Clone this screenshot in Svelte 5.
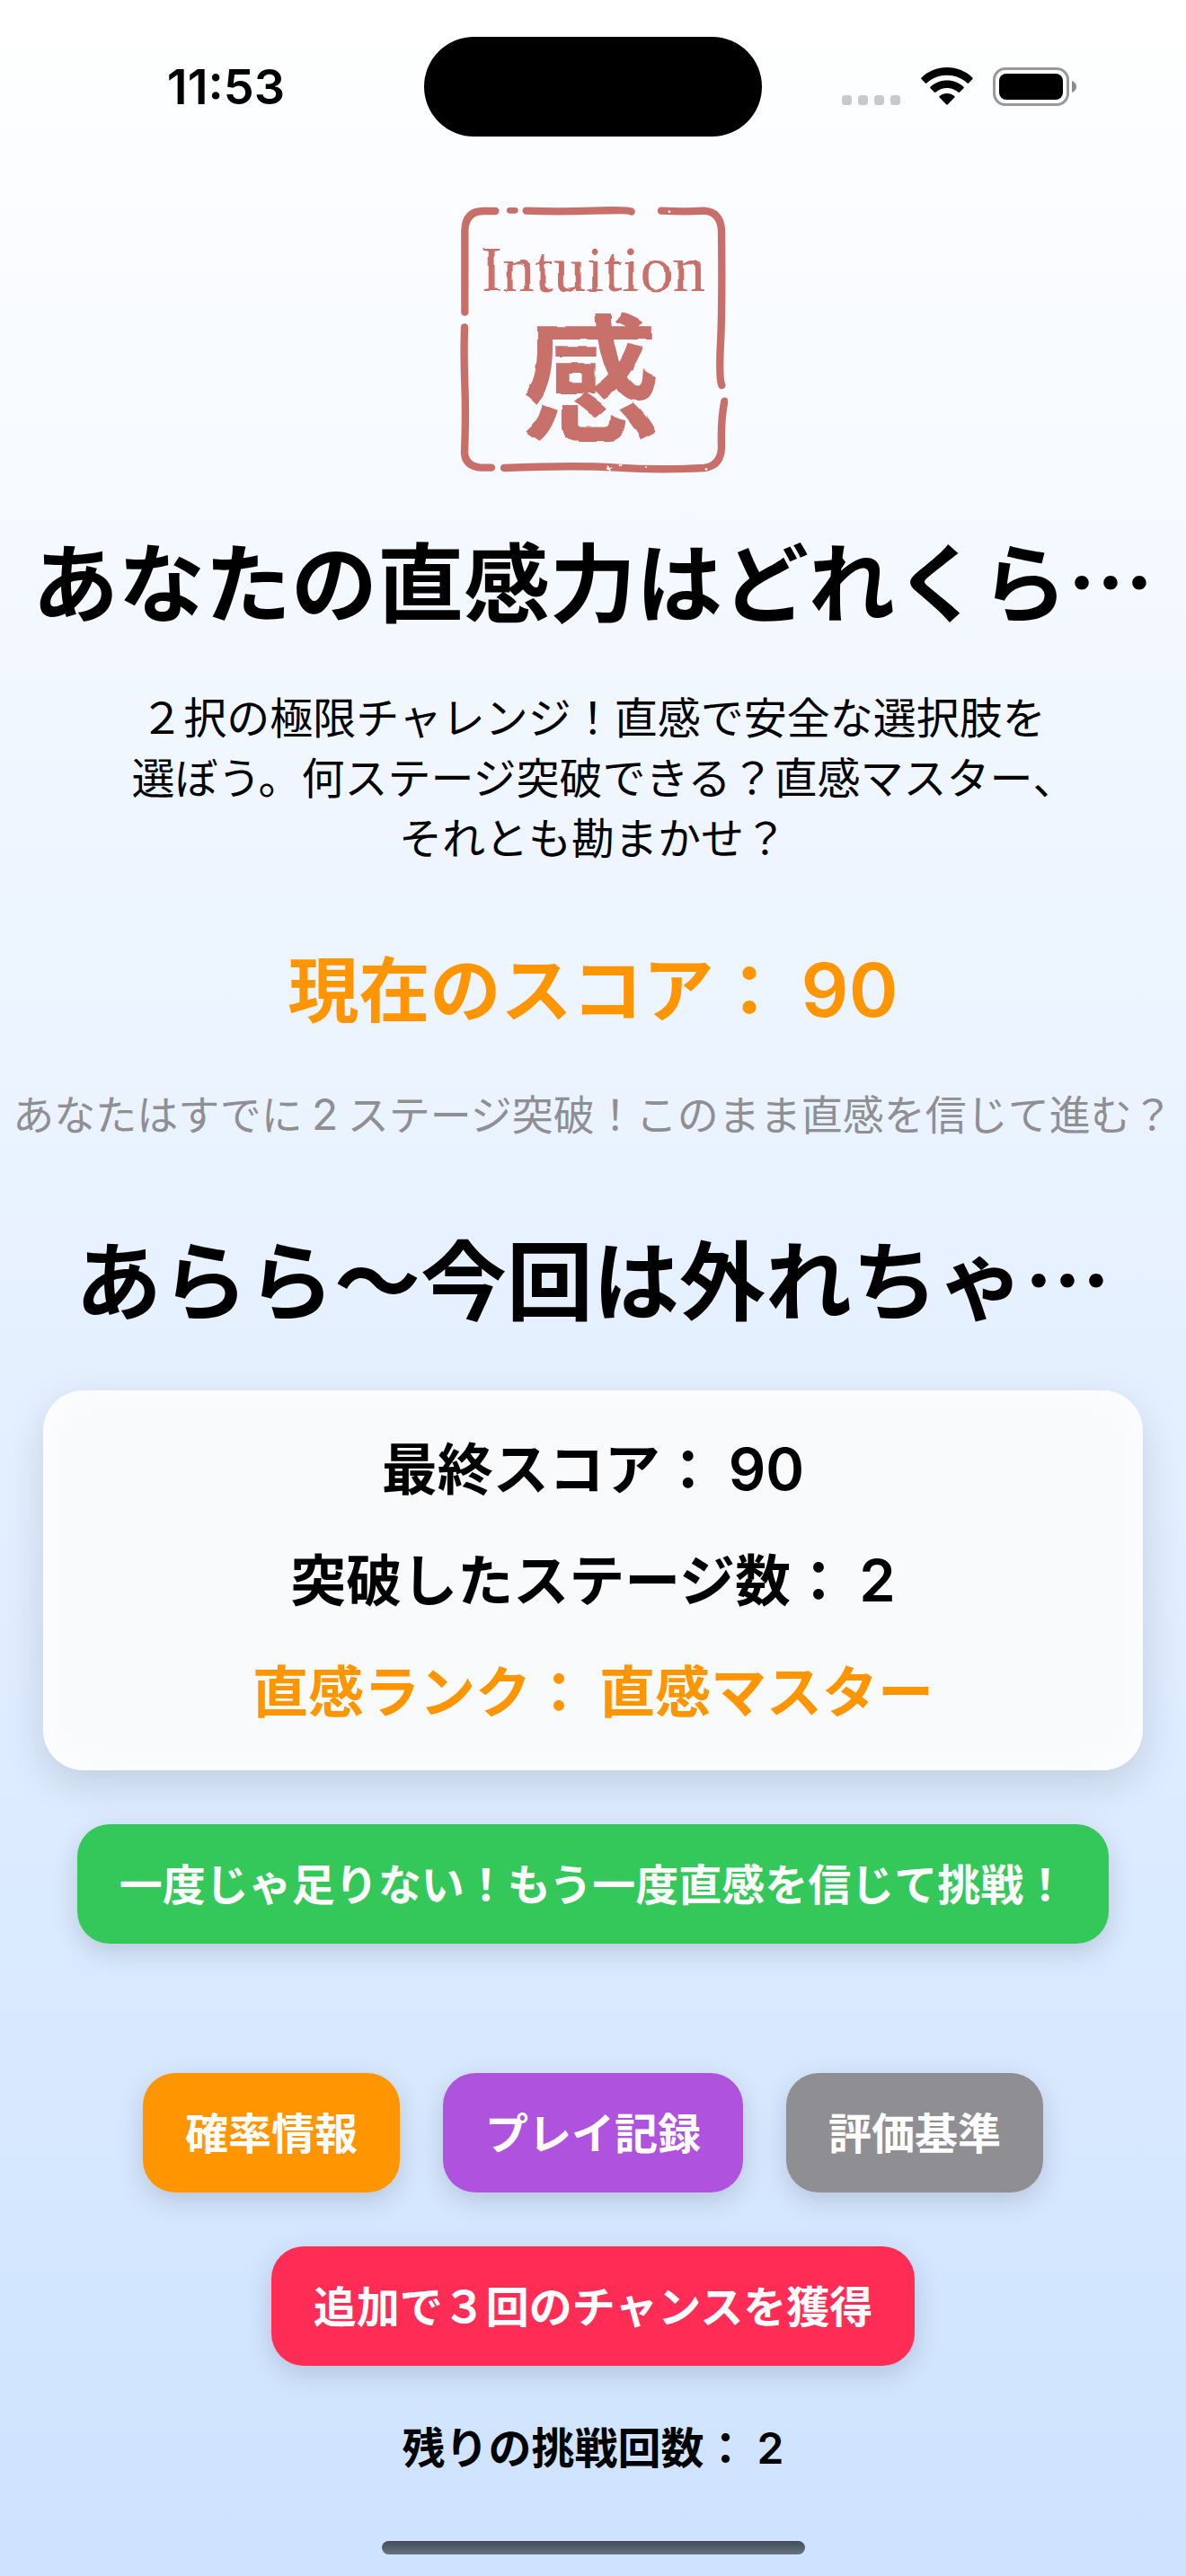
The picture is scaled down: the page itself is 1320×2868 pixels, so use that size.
<script lang="ts">
  let score = $state(90);
  let stage = $state(2);
  let attempts = $state(2);
  let rank = $state('直感マスター');

  const infoButtons = [
    { label: '確率情報', tone: 'orange' },
    { label: 'プレイ記録', tone: 'purple' },
    { label: '評価基準', tone: 'gray' },
  ];
</script>

<div class="screen" lang="ja">
  <!-- ── Status bar ─────────────────────────────────────────────────────── -->
  <header class="status-bar">
    <time class="clock">11:53</time>
    <div class="island"></div>
    <div class="indicators">
      <svg class="signal" viewBox="0 0 65 43" aria-label="signal">
        <g fill="#c8c9ca">
          <rect x="0" y="31" width="11" height="11" rx="3.5" />
          <rect x="18" y="31" width="11" height="11" rx="3.5" />
          <rect x="36" y="31" width="11" height="11" rx="3.5" />
          <rect x="54" y="31" width="11" height="11" rx="3.5" />
        </g>
      </svg>
      <svg class="wifi" viewBox="0 0 58 43" aria-label="wifi">
        <path d="M29 0C18 0 8 4.300 0.600 11.400Q-0.200 12.200 0.600 13L4.800 17.400Q5.600 18.200 6.400 17.400C12.500 11.800 20.500 8.700 29 8.700S45.500 11.800 51.600 17.400Q52.400 18.200 53.200 17.400L57.400 13Q58.200 12.200 57.400 11.400C50 4.300 40 0 29 0Z" />
        <path d="M29 14.600C21.800 14.600 15.300 17.300 10.500 21.700Q9.700 22.500 10.500 23.300L14.800 27.600Q15.600 28.400 16.400 27.700C19.800 24.800 24.200 23 29 23S38.200 24.800 41.600 27.700Q42.400 28.400 43.200 27.600L47.500 23.300Q48.300 22.500 47.500 21.700C42.700 17.300 36.200 14.600 29 14.600Z" />
        <path d="M29 29C25.800 29 22.900 30.100 20.700 31.900Q19.800 32.700 20.600 33.500L28.200 41.300Q29 42.100 29.800 41.300L37.400 33.500Q38.200 32.700 37.300 31.900C35.100 30.100 32.200 29 29 29Z" />
      </svg>
      <svg class="battery" viewBox="0 0 94 43" aria-label="battery">
        <rect x="1.500" y="1.500" width="82" height="40" rx="12.500" fill="none" stroke="#999" stroke-width="3" />
        <rect x="7" y="7" width="71" height="29" rx="8" />
        <path d="M88 15C91 16 93 18.500 93 21.500S91 27 88 28Z" fill="#8c8c8c" />
      </svg>
    </div>
  </header>

  <main class="content">
    <svg class="seal" viewBox="30 36 900 900" role="img" aria-label="Intuition 感">
      <defs>
        <filter id="rough" x="-5%" y="-5%" width="110%" height="110%">
          <feTurbulence type="fractalNoise" baseFrequency="0.02" numOctaves="1" seed="4" result="noise" />
          <feDisplacementMap in="SourceGraphic" in2="noise" scale="12" xChannelSelector="R" yChannelSelector="G" />
        </filter>
      </defs>
      <g class="frame">
        <path d="M52 398V125Q54 60 115 60H154" />
        <path d="M202 58H220" stroke-width="20" />
        <path d="M257 59Q360 63 480 59T608 62" />
        <path d="M708 59Q790 63 850 59Q904 62 909 122Q912 380 906 500T910 642" />
        <path d="M919 695Q906 760 909 850Q906 912 850 918Q700 926 560 917T183 918" />
        <path d="M51 448Q48 540 52 640T51 868Q54 912 105 917H141" />
      </g>
      <text filter="url(#rough)">
        <tspan class="seal-latin" x="482" y="328">Intuition</tspan>
        <tspan class="seal-kanji" x="472" y="795">感</tspan>
      </text>
      <g class="specks">
        <path d="M526 910l7 2 1 6 12-2-9 7 4 8-10-6-9-5 6-2z" />
        <path d="M566 907l12 0-2 5-9 1z" />
        <circle cx="735" cy="62" r="4" />
        <circle cx="657" cy="915" r="3" />
        <circle cx="858" cy="922" r="4" />
      </g>
    </svg>

    <h1 class="headline">あなたの直感力はどれくら…</h1>

    <p class="intro">
      ２択の極限チャレンジ！直感で安全な選択肢を<br />
      選ぼう。何ステージ突破できる？直感マスター<span class="line-end">、</span><br />
      それとも勘まかせ？
    </p>

    <p class="score">現在のスコア： <span class="num">{score}</span></p>
    <p class="progress">あなたはすでに <span class="num">{stage}</span> ステージ突破！このまま直感を信じて進む？</p>

    <h2 class="headline">あらら〜今回は外れちゃ…</h2>

    <section class="result-card">
      <p>最終スコア： <span class="num">{score}</span></p>
      <p>突破したステージ数： <span class="num">{stage}</span></p>
      <p class="rank">直感ランク： {rank}</p>
    </section>

    <button class="btn green">一度じゃ足りない！もう一度直感を信じて挑戦！</button>

    <div class="info-row">
      {#each infoButtons as { label, tone }}
        <button class="btn {tone}">{label}</button>
      {/each}
    </div>

    <button class="btn pink">追加で３回のチャンスを獲得</button>

    <p class="attempts">残りの挑戦回数： <span class="num">{attempts}</span></p>
  </main>

  <div class="home-indicator"></div>
</div>

<style>
  :global(body) {
    margin: 0;
  }

  .screen {
    box-sizing: border-box;
    min-height: 100vh;
    padding-bottom: 24px;
    display: flex;
    flex-direction: column;
    background: linear-gradient(#fff, #cee3ff);
    color: #000;
    font-family: 'Noto Sans CJK JP', sans-serif;
  }

  h1,
  h2,
  p {
    margin: 0;
  }

  /* ── Status bar ───────────────────────────────────────────────────── */

  .status-bar {
    display: grid;
    grid-template-columns: 1fr 376px 1fr;
    align-items: center;
    padding-top: 41px;
  }

  .clock {
    justify-self: end;
    padding-right: 155px;
    font: 600 54px/60px Inter, sans-serif;
  }

  .island {
    height: 111px;
    border-radius: 56px;
    background: #000;
  }

  .indicators {
    display: flex;
    align-items: center;
    padding-left: 89px;
  }

  .indicators svg {
    height: 43px;
  }

  .signal {
    width: 65px;
    margin-right: 23px;
  }

  .wifi {
    width: 58px;
    margin-right: 22px;
  }

  .battery {
    width: 94px;
  }

  /* ── Content ──────────────────────────────────────────────────────── */

  .content {
    display: flex;
    flex-direction: column;
    align-items: center;
    gap: 60px;
    padding: 75px 0 60px;
    text-align: center;
  }

  .seal {
    width: 300px;
    height: 300px;
    fill: #c86f6a;
  }

  .frame {
    fill: none;
    stroke: #c86f6a;
    stroke-width: 25;
    stroke-linecap: round;
  }

  .specks {
    fill: #fafcff;
  }

  .seal-latin {
    font: 218px 'Liberation Serif', serif;
    text-anchor: middle;
  }

  .seal-kanji {
    font: bold 460px 'Noto Sans CJK JP', sans-serif;
    text-anchor: middle;
  }

  .headline {
    padding-bottom: 2px;
    font-size: 96px;
    font-weight: 700;
    line-height: 114px;
    white-space: nowrap;
  }

  .intro {
    font-size: 48px;
    line-height: 67px;
  }

  .line-end {
    font-feature-settings: 'halt';
  }

  .num {
    font-family: Inter, sans-serif;
    line-height: 1;
  }

  .score {
    margin-top: 24px;
    color: #ff9500;
    font-size: 79px;
    font-weight: 700;
    line-height: 100px;
  }

  .score .num {
    font-size: 83px;
    font-weight: 600;
  }

  .progress {
    margin-bottom: 36px;
    color: #8e8e93;
    font-size: 46px;
    line-height: 60px;
    white-space: nowrap;
  }

  .progress .num {
    font-size: 48px;
  }

  /* ── Result card ──────────────────────────────────────────────────── */

  .result-card {
    box-sizing: border-box;
    align-self: stretch;
    display: flex;
    flex-direction: column;
    gap: 48px;
    margin: 8px 48px 0;
    padding: 46px 50px 53px;
    border-radius: 45px;
    background: #f9fafc;
    box-shadow:
      0 15px 45px rgba(0, 0, 0, 0.13),
      inset 0 0 40px #fdfeff;
    font-size: 62px;
    font-weight: 700;
    line-height: 76px;
  }

  .result-card .num {
    font-size: 65px;
    font-weight: 600;
  }

  .rank {
    color: #ff9500;
  }

  /* ── Buttons ──────────────────────────────────────────────────────── */

  .btn {
    padding: 30px 47px 34px;
    border: none;
    border-radius: 36px;
    box-shadow: 0 9px 30px rgba(0, 0, 0, 0.15);
    color: #fff;
    font: inherit;
    font-size: 48px;
    font-weight: 700;
    line-height: 69px;
    cursor: pointer;
  }

  .green {
    background: #34c759;
  }

  .orange {
    background: #ff9500;
  }

  .purple {
    background: #af52de;
  }

  .gray {
    background: #8e8e93;
  }

  .pink {
    background: #ff2d55;
  }

  .info-row {
    display: flex;
    gap: 48px;
    margin-top: 84px;
  }

  .attempts {
    font-size: 48px;
    font-weight: 700;
    line-height: 56px;
  }

  .attempts .num {
    font-weight: 600;
  }

  .home-indicator {
    align-self: center;
    width: 471px;
    height: 15px;
    margin-top: auto;
    border-radius: 8px;
    background: linear-gradient(#434c57, #667381);
  }
</style>
